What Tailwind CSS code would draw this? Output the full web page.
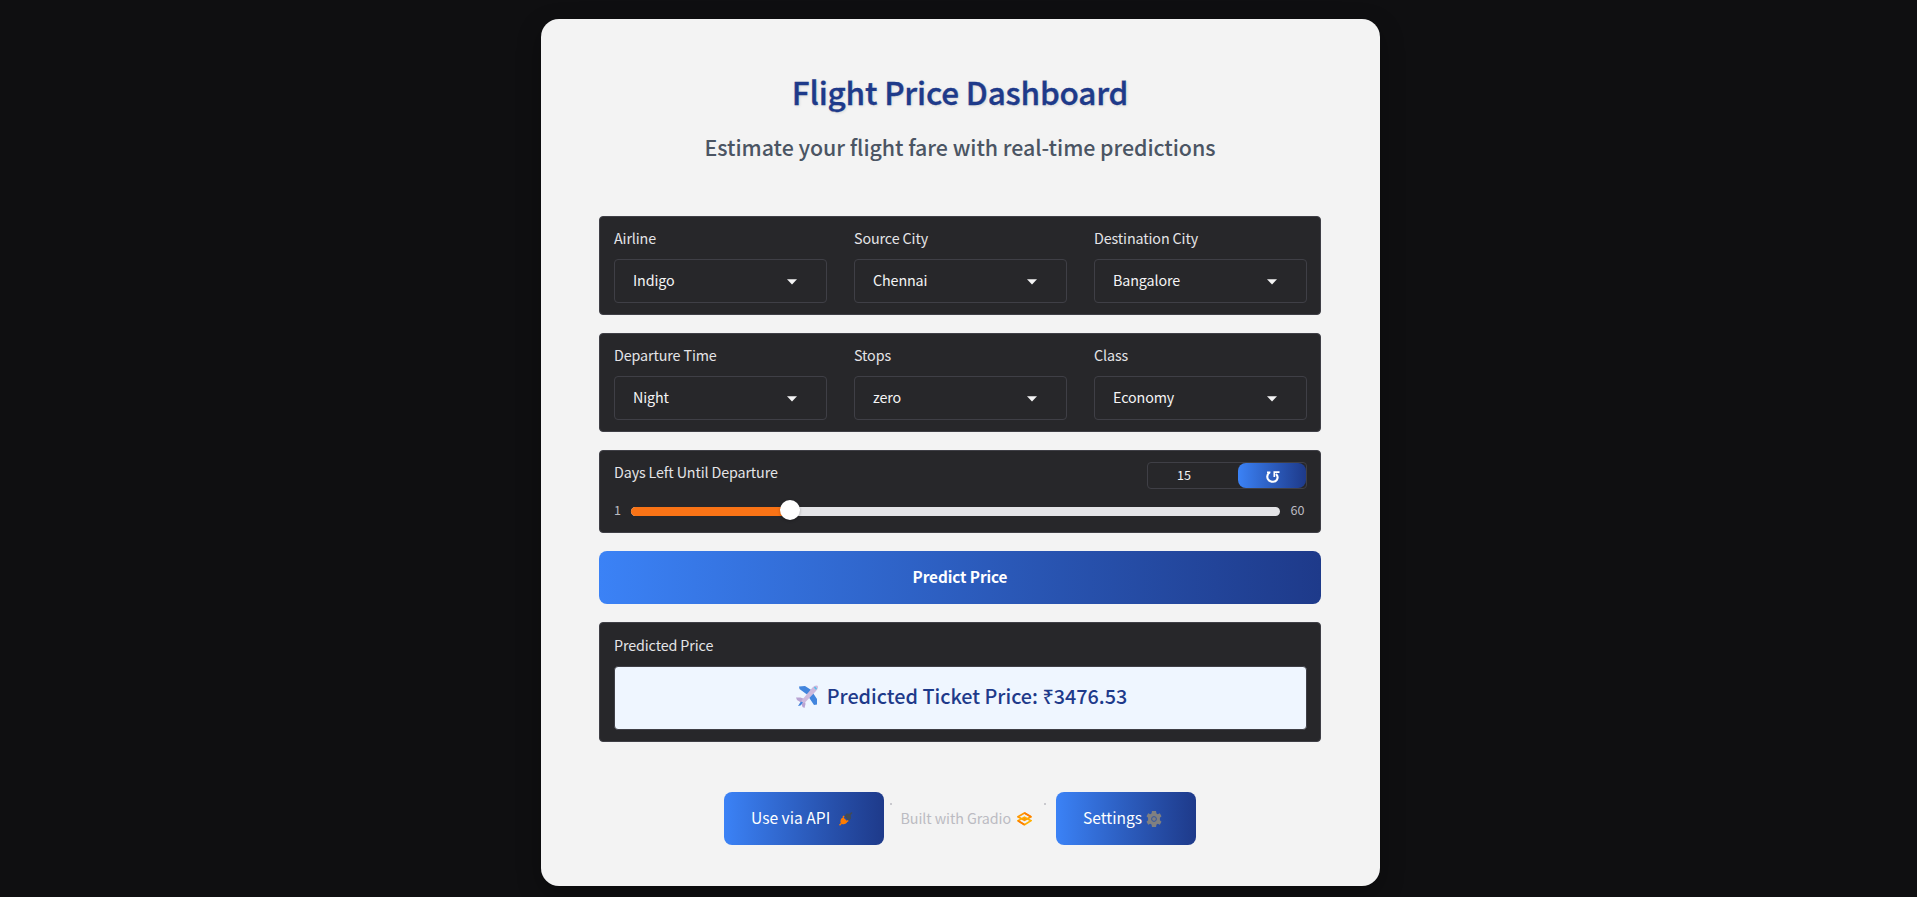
<!DOCTYPE html>
<html lang="en">
<head>
<meta charset="utf-8">
<title>Flight Price Dashboard</title>
<script src="https://cdn.jsdelivr.net/npm/@tailwindcss/browser@4"></script>
</head>
<body class="h-[897px] overflow-hidden bg-[#0f0f11] pt-[19px] pl-[541px] font-['Noto_Sans_CJK_SC','Noto_Sans',sans-serif]">
<main class="flex h-[867px] w-[839px] flex-col rounded-[18px] bg-[#f3f3f3] pr-[59px] pl-[58px] pt-[46px] whitespace-nowrap shadow-[0_8px_24px_rgba(0,0,0,0.3)]">
  <h1 class="h-[52px] text-center text-[31.5px] leading-[52px] font-medium tracking-[-0.18px] text-[#1e3a8a] [-webkit-text-stroke:0.35px_#1e3a8a] text-shadow-[1px_1px_3px_rgba(0,0,0,0.12)]">Flight Price Dashboard</h1>
  <h2 class="mt-[10px] h-10 text-center text-[21.4px] leading-10 font-medium tracking-[-0.05px] text-[#4b5563]">Estimate your flight fare with real-time predictions</h2>

  <div class="mt-[49px] flex flex-col gap-[18px]">
    <section class="grid h-[99px] grid-cols-[213px_213px_213px] gap-[27px] rounded-[4px] border border-[#3f3f46] bg-[#27272a] px-[14px] pt-[11px] tracking-[-0.11px]">
      <div>
        <div class="h-5 text-[14.3px] leading-5 text-[#e4e4e7]">Airline</div>
        <div class="mt-[11px] flex h-11 items-center justify-between rounded-[4px] border border-[#3f3f46] pr-[29px] pl-[18px] text-[14.3px] text-[#f4f4f5]"><span class="pb-[3px]">Indigo</span><svg class="mt-[1px] h-[6px] w-[10px]" viewBox="0 0 10 6"><path d="M0 .2H10L5 5.4z" fill="#f4f4f5"/></svg></div>
      </div>
      <div>
        <div class="h-5 text-[14.3px] leading-5 text-[#e4e4e7]">Source City</div>
        <div class="mt-[11px] flex h-11 items-center justify-between rounded-[4px] border border-[#3f3f46] pr-[29px] pl-[18px] text-[14.3px] text-[#f4f4f5]"><span class="pb-[3px]">Chennai</span><svg class="mt-[1px] h-[6px] w-[10px]" viewBox="0 0 10 6"><path d="M0 .2H10L5 5.4z" fill="#f4f4f5"/></svg></div>
      </div>
      <div>
        <div class="h-5 text-[14.3px] leading-5 text-[#e4e4e7]">Destination City</div>
        <div class="mt-[11px] flex h-11 items-center justify-between rounded-[4px] border border-[#3f3f46] pr-[29px] pl-[18px] text-[14.3px] text-[#f4f4f5]"><span class="pb-[3px]">Bangalore</span><svg class="mt-[1px] h-[6px] w-[10px]" viewBox="0 0 10 6"><path d="M0 .2H10L5 5.4z" fill="#f4f4f5"/></svg></div>
      </div>
    </section>

    <section class="grid h-[99px] grid-cols-[213px_213px_213px] gap-[27px] rounded-[4px] border border-[#3f3f46] bg-[#27272a] px-[14px] pt-[11px] tracking-[-0.11px]">
      <div>
        <div class="h-5 text-[14.3px] leading-5 text-[#e4e4e7]">Departure Time</div>
        <div class="mt-[11px] flex h-11 items-center justify-between rounded-[4px] border border-[#3f3f46] pr-[29px] pl-[18px] text-[14.3px] text-[#f4f4f5]"><span class="pb-[3px]">Night</span><svg class="mt-[1px] h-[6px] w-[10px]" viewBox="0 0 10 6"><path d="M0 .2H10L5 5.4z" fill="#f4f4f5"/></svg></div>
      </div>
      <div>
        <div class="h-5 text-[14.3px] leading-5 text-[#e4e4e7]">Stops</div>
        <div class="mt-[11px] flex h-11 items-center justify-between rounded-[4px] border border-[#3f3f46] pr-[29px] pl-[18px] text-[14.3px] text-[#f4f4f5]"><span class="pb-[3px]">zero</span><svg class="mt-[1px] h-[6px] w-[10px]" viewBox="0 0 10 6"><path d="M0 .2H10L5 5.4z" fill="#f4f4f5"/></svg></div>
      </div>
      <div>
        <div class="h-5 text-[14.3px] leading-5 text-[#e4e4e7]">Class</div>
        <div class="mt-[11px] flex h-11 items-center justify-between rounded-[4px] border border-[#3f3f46] pr-[29px] pl-[18px] text-[14.3px] text-[#f4f4f5]"><span class="pb-[3px]">Economy</span><svg class="mt-[1px] h-[6px] w-[10px]" viewBox="0 0 10 6"><path d="M0 .2H10L5 5.4z" fill="#f4f4f5"/></svg></div>
      </div>
    </section>

    <section class="h-[83px] rounded-[4px] border border-[#3f3f46] bg-[#27272a] pr-[13px] pl-[14px] pt-[11px]">
      <div class="flex h-[27px] items-start justify-between">
        <span class="h-5 text-[14.3px] leading-5 tracking-[-0.13px] text-[#e4e4e7]">Days Left Until Departure</span>
        <div class="flex h-[27px] w-[160px] overflow-hidden rounded-[4px] border border-[#3f3f46]">
          <span class="w-[90px] pl-[29px] text-[12.6px] leading-6 text-[#f4f4f5]">15</span>
          <button class="flex flex-1 items-center justify-center rounded-lg bg-linear-to-r from-[#3b82f6] to-[#1e3a8a]"><svg class="mt-[2px] ml-[1px] h-3 w-[14px]" viewBox="0 0 14 12" fill="none" stroke="#fff"><path d="M3.6 1.5C.8 3.4.5 7.4 2.9 9.4s6.400 1.800 7.900-.5c1.200-2 .9-4.300-.8-6" stroke-width="2.100"/><path d="M1 1.300h3.400M13.500 1.100H8.300V6" stroke-width="1.700"/></svg></button>
        </div>
      </div>
      <div class="mt-[11px] flex h-5 items-center text-[12.6px] text-[#bbbbc2]">
        <span class="w-[17px] leading-5">1</span>
        <div class="relative mt-[3px] h-[9px] w-[649px] rounded-full bg-[#e4e4e7]">
          <div class="h-full rounded-l-full bg-[#f97316]" style="width:24.5%"></div>
          <div class="absolute -top-[7px] left-[149px] size-5 rounded-full bg-white shadow-[0_1px_3px_rgba(0,0,0,0.25)]"></div>
        </div>
        <span class="ml-[10.500px] leading-5">60</span>
      </div>
    </section>

    <button class="h-[53px] rounded-lg bg-linear-to-r from-[#3b82f6] to-[#1e3a8a] pb-[3px] text-[15.3px] leading-5 font-bold tracking-[-0.08px] text-white">Predict Price</button>

    <section class="h-[120px] rounded-[4px] border border-[#3f3f46] bg-[#27272a] pr-[13px] pl-[14px] pt-3">
      <div class="h-5 text-[14.3px] leading-5 tracking-[-0.11px] text-[#e4e4e7]">Predicted Price</div>
      <div class="mt-[11px] flex h-[64px] items-center justify-center rounded-[4px] border border-[#3f3f46] bg-[#eff6ff] pb-1 pl-[2px] text-[19.8px] leading-8 font-medium text-[#1e3a8a]">
        <svg class="mr-[9px] h-[23px] w-[22px]" viewBox="0 0 22 23"><path d="M3 1.500 9 1l7 4.500-5 4L3.500 4zM21 19.500V14l-4-6-4 4.500 5 7.500z" fill="#4285dd"/><path d="M0 12.500h4.500l4 1.500 1 5-1 4-2-1-1.500-4.500-4-2.500z" fill="#b9a3d2"/><path d="M2.500 20.500 6 15 16.500 2.500Q19-.3 21.500.7 23 3 20 6L9 17.500z" fill="#cdb9dd"/><path d="M2 21 5 16.500l2 1-2.500 3z" fill="#4285dd"/><path d="m18.500 2 2 2.300" stroke="#4ec1ec" stroke-width="1.500"/></svg>
        <span>Predicted Ticket Price: ₹3476.53</span>
      </div>
    </section>
  </div>

  <footer class="mt-[50px] ml-[125px] flex h-[53px] items-start text-[#bbbbc2]">
    <button class="flex h-[53px] w-[160px] items-center rounded-lg bg-linear-to-r from-[#3b82f6] to-[#1e3a8a] pl-[27px] text-[15.6px] text-white"><span class="pb-px">Use via API</span>
      <svg class="ml-[9px] h-[14px] w-[14px]" viewBox="0 0 14 14"><path d="M5.500 4 7.500 1.500l3 .300 2-1.800 1 1-1.800 2 .3 3.500-2.500 2.500z" fill="#414b57"/><path d="M1.800 11.200C.8 8.500 2 6 4.200 5.200L8.500 9.600C7.500 12 5 12.800 3 12z" fill="#ff7c00"/><path d="m4 5.500 1-1.500M8 9.500l1.300-1M.5 13.300l2-2" stroke="#ff7c00" stroke-width="1.400"/></svg>
    </button>
    <span class="mt-[11px] ml-[6px] size-[2px] rounded-full bg-[#bbbbc2]"></span>
    <span class="ml-[8.500px] flex h-[53px] w-[134px] items-center text-[14.3px] tracking-[-0.08px]"><span class="pb-[2px]">Built with Gradio</span>
      <svg class="ml-[6px] h-[14px] w-[15px]" viewBox="0 0 15 14"><path d="M1 4.800 7.500 1l6.500 3.800L7.500 8.400z" fill="none" stroke="#ff9800" stroke-width="1.700"/><path d="M1 8.700 7.500 5.200 14 8.700 7.500 12.700z" fill="none" stroke="#ffb000" stroke-width="1.700"/><path d="m7.500 1 6.500 3.800M1 8.700l6.500 4" stroke="#ff7c00" stroke-width="1.700"/><path d="M5.500 6.800 7.500 5.700l2 1.100-2 1.200z" fill="#ff9800"/></svg>
    </span>
    <span class="mt-[11px] ml-[9.500px] size-[2px] rounded-full bg-[#bbbbc2]"></span>
    <button class="ml-[10px] flex h-[53px] w-[140px] items-center rounded-lg bg-linear-to-r from-[#3b82f6] to-[#1e3a8a] pl-[27px] text-[15.6px] text-white"><span class="pb-px">Settings</span>
      <svg class="ml-[5px] h-[16px] w-[14px] overflow-visible" viewBox="0 0 14 16" fill="#808080"><path d="M5 0h4l.5 2.400 1.300.8 2-1 1.700 3-1.600 1.600v2.400l1.600 1.600-1.700 3-2-1-1.300.8L9 16H5l-.5-2.400-1.300-.8-2 1-1.700-3 1.600-1.600V6.800L-.5 5.200l1.700-3 2 1 1.300-.8z"/><circle cx="7" cy="8" r="2.400" fill="#808080" stroke="#34569f" stroke-width="1"/></svg>
    </button>
  </footer>
</main>
</body>
</html>
